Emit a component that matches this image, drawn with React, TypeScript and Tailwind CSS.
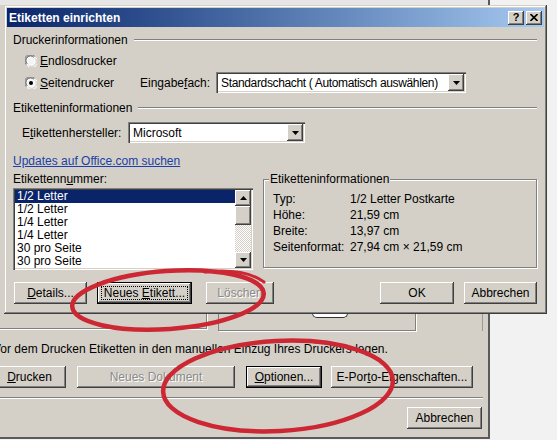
import type { ReactNode } from 'react'
import clsx from 'clsx'

const raised =
  'shadow-[inset_-1px_-1px_0_#404040,inset_1px_1px_0_#ffffff,inset_-2px_-2px_0_#808080,inset_2px_2px_0_#d4d0c8]'
const sunken =
  'shadow-[inset_1px_1px_0_#808080,inset_2px_2px_0_#404040,inset_-1px_-1px_0_#ffffff,inset_-2px_-2px_0_#d4d0c8]'

function Button({
  children,
  className,
  disabled,
  isDefault,
  focused,
}: {
  children: ReactNode
  className?: string
  disabled?: boolean
  isDefault?: boolean
  focused?: boolean
}) {
  return (
    <div
      className={clsx(
        'flex h-[22px] shrink-0 items-center justify-center bg-[#d4d0c8] leading-[14px] whitespace-nowrap',
        raised,
        isDefault && 'border border-black',
        disabled && 'text-[#8a8a8a] [text-shadow:1px_1px_0_#ffffff]',
        className,
      )}
    >
      {focused ? (
        <div className="m-[3px] flex flex-1 self-stretch items-center justify-center border border-dotted border-black">
          <span>{children}</span>
        </div>
      ) : (
        <span>{children}</span>
      )}
    </div>
  )
}

function Radio({ checked }: { checked?: boolean }) {
  return (
    <svg width="12" height="12" viewBox="0 0 12 12" className="shrink-0">
      <circle cx="6" cy="6" r="5.5" fill="#ffffff" />
      <path d="M1.2 9.6 A5.4 5.4 0 0 1 9.6 1.2" stroke="#808080" strokeWidth="1" fill="none" />
      <path d="M2.2 8.8 A4.3 4.3 0 0 1 8.8 2.2" stroke="#404040" strokeWidth="1" fill="none" />
      <path d="M10.8 2.4 A5.4 5.4 0 0 1 2.4 10.8" stroke="#ffffff" strokeWidth="1" fill="none" />
      <path d="M9.8 3.2 A4.3 4.3 0 0 1 3.2 9.8" stroke="#d4d0c8" strokeWidth="1" fill="none" />
      <circle cx="6" cy="6" r="3.6" fill="#f4f4f4" />
      {checked && <circle cx="6" cy="6" r="2" fill="#000000" />}
    </svg>
  )
}

function Arrow({ up }: { up?: boolean }) {
  return (
    <svg width="7" height="4" viewBox="0 0 7 4">
      <path d={up ? 'M3.5 0 L7 4 L0 4 Z' : 'M0 0 L7 0 L3.5 4 Z'} fill="#000000" />
    </svg>
  )
}

function Combo({ value, className, textClass }: { value: string; className: string; textClass?: string }) {
  return (
    <div className={clsx('flex h-[21px] items-stretch bg-white p-[2px]', sunken, className)}>
      <div className={clsx('flex flex-1 items-center overflow-hidden whitespace-nowrap pl-[3px]', textClass)}>
        {value}
      </div>
      <div className={clsx('flex w-[16px] items-center justify-center bg-[#d4d0c8]', raised)}>
        <Arrow />
      </div>
    </div>
  )
}

function GroupHeader({ label, className }: { label: string; className?: string }) {
  return (
    <div className={clsx('flex h-[14px] items-center gap-[6px]', className)}>
      <span className="leading-[14px]">{label}</span>
      <div className="flex-1 border-t border-b border-t-[#808080] border-b-white" />
    </div>
  )
}

const labels = ['1/2 Letter', '1/2 Letter', '1/4 Letter', '1/4 Letter', '30 pro Seite', '30 pro Seite']

const details = [
  ['Typ:', '1/2 Letter Postkarte'],
  ['Höhe:', '21,59 cm'],
  ['Breite:', '13,97 cm'],
  ['Seitenformat:', '27,94 cm × 21,59 cm'],
]

function BackWindow() {
  return (
    <div className="absolute left-[-20px] top-0 flex h-[439px] w-[510px] flex-col border-r-2 border-b-2 border-[#5a5a5a] bg-[#d4d0c8]">
      <div className="h-[5px] bg-[#e6e6e6] bg-[repeating-linear-gradient(90deg,#8890a4_0_1px,transparent_1px_4px)] bg-size-[4px_2px] bg-no-repeat" />
      <div className="flex h-[326px]">
        <div className="h-[324px] w-[227px] border-r border-b border-[#808080] shadow-[1px_1px_0_#ffffff]" />
        <div className="ml-[11px] flex w-[198px] items-end justify-center border border-[#808080] shadow-[1px_1px_0_#ffffff]">
          <div className="mb-[12px] ml-[26px] h-[14px] w-[36px] rounded-b-[5px] border-x border-b border-[#333333] bg-white" />
        </div>
        <div className="ml-auto mr-[5px] w-px bg-[#9a9a9a]" />
      </div>
      <div className="mt-[11px] h-[14px] pl-[13px] leading-[14px] whitespace-nowrap">
        Vor dem Drucken Etiketten in den manuellen Einzug Ihres Druckers legen.
      </div>
      <div className="mt-[10px] flex pl-[13px]">
        <Button className="w-[73px]">
          <span className="underline">D</span>rucken
        </Button>
        <Button className="ml-[11px] w-[158px]" disabled>
          Neues Dokument
        </Button>
        <Button className="ml-[11px] w-[76px]" isDefault>
          <span className="underline">O</span>ptionen...
        </Button>
        <Button className="ml-[9px] w-[142px]">
          E-Por<span className="underline">t</span>o-Eigenschaften...
        </Button>
      </div>
      <div className="mt-[9px] mr-[5px] border-t border-b border-t-[#808080] border-b-white" />
      <div className="mt-[8px] flex justify-end pr-[6px]">
        <Button className="w-[75px]">Abbrechen</Button>
      </div>
    </div>
  )
}

function LabelDialog() {
  return (
    <div className="absolute left-[4px] top-[5px] flex h-[309px] w-[543px] flex-col bg-[#d4d0c8] p-[3px] shadow-[inset_-1px_-1px_0_#404040,inset_1px_1px_0_#d4d0c8,inset_-2px_-2px_0_#808080,inset_2px_2px_0_#ffffff]">
      <div className="flex h-[19px] items-center bg-linear-to-r from-[#0a246a] to-[#a6caf0] pl-[2px] pr-[2px]">
        <span className="text-[12px] font-bold text-white">Etiketten einrichten</span>
        <div className="ml-auto flex gap-[2px]">
          <div className={clsx('flex h-[14px] w-[16px] items-center justify-center bg-[#d4d0c8] text-[11px] leading-none font-bold', raised)}>
            ?
          </div>
          <div className={clsx('flex h-[14px] w-[16px] items-center justify-center bg-[#d4d0c8]', raised)}>
            <svg width="8" height="7" viewBox="0 0 8 7">
              <path d="M0.5 0 L7.5 7 M7.5 0 L0.5 7" stroke="#000000" strokeWidth="1.6" />
            </svg>
          </div>
        </div>
      </div>

      <div className="flex flex-col pl-[6px] pr-[7px]">
        <GroupHeader label="Druckerinformationen" className="mt-[6px]" />

        <div className="mt-[7px] flex h-[14px] items-center gap-[3px] pl-[12px]">
          <Radio />
          <span>
            <span className="underline">E</span>ndlosdrucker
          </span>
        </div>

        <div className="mt-[4px] flex h-[21px] items-center">
          <div className="flex w-[127px] items-center gap-[3px] pl-[12px]">
            <Radio checked />
            <span>
              <span className="underline">S</span>eitendrucker
            </span>
          </div>
          <span className="w-[76px]">
            Eingabe<span className="underline">f</span>ach:
          </span>
          <Combo
            value="Standardschacht ( Automatisch auswählen)"
            className="w-[250px]"
            textClass="tracking-[-0.35px]"
          />
        </div>

        <GroupHeader label="Etiketteninformationen" className="mt-[8px]" />

        <div className="mt-[7px] flex h-[21px] items-center pl-[9px]">
          <span className="w-[106px]">
            E<span className="underline">t</span>ikettenhersteller:
          </span>
          <Combo value="Microsoft" className="w-[177px]" />
        </div>

        <div className="mt-[11px] h-[14px] leading-[14px]">
          <span className="text-[#203fa5] underline">Updates auf Office.com suchen</span>
        </div>

        <div className="mt-[4px] flex gap-[10px]">
          <div className="flex w-[240px] flex-col">
            <div className="h-[14px] leading-[14px]">
              Etikettenn<span className="underline">u</span>mmer:
            </div>
            <div className={clsx('mt-[2px] flex h-[82px] bg-white p-[2px]', sunken)}>
              <div className="flex flex-1 flex-col">
                {labels.map((l, i) => (
                  <div
                    key={i}
                    className={clsx(
                      'h-[13px] pl-[2px] leading-[13px]',
                      i === 0 && 'bg-[#0a246a] text-white',
                    )}
                  >
                    {l}
                  </div>
                ))}
              </div>
              <div className="flex w-[16px] flex-col">
                <div className={clsx('flex h-[16px] items-center justify-center bg-[#d4d0c8]', raised)}>
                  <Arrow up />
                </div>
                <div className={clsx('h-[19px] bg-[#d4d0c8]', raised)} />
                <div className="flex-1 bg-[repeating-conic-gradient(#ffffff_0_25%,#d4d0c8_0_50%)] bg-size-[2px_2px]" />
                <div className={clsx('flex h-[16px] items-center justify-center bg-[#d4d0c8]', raised)}>
                  <Arrow />
                </div>
              </div>
            </div>
          </div>

          <fieldset className="h-[96px] w-[274px] border border-[#808080] shadow-[inset_1px_1px_0_#ffffff,1px_1px_0_#ffffff]">
            <legend className="ml-[5px] bg-[#d4d0c8] px-[1px] leading-[14px]">Etiketteninformationen</legend>
            <div className="flex flex-col pt-[5px] pl-[9px]">
              {details.map(([k, v]) => (
                <div key={k} className="flex h-[16px] items-center">
                  <span className="w-[77px]">{k}</span>
                  <span>{v}</span>
                </div>
              ))}
            </div>
          </fieldset>
        </div>

        <div className="mt-[12px] flex">
          <Button className="ml-[1px] w-[73px]">
            <span className="underline">D</span>etails...
          </Button>
          <Button className="ml-[10px] w-[95px]" isDefault focused>
            Neues <span className="underline">E</span>tikett...
          </Button>
          <Button className="ml-[14px] w-[68px]" disabled>
            Löschen
          </Button>
          <Button className="ml-auto w-[74px]">OK</Button>
          <Button className="ml-[10px] w-[73px]">Abbrechen</Button>
        </div>
      </div>
    </div>
  )
}

function Marks() {
  return (
    <svg className="pointer-events-none absolute inset-0" width="557" height="440" viewBox="0 0 557 440">
      <g fill="none" stroke="#cc2733" strokeLinecap="round">
        <ellipse cx="168" cy="300" rx="96" ry="29" transform="rotate(-4 168 300)" strokeWidth="4.5" />
        <path d="M205 272 Q245 268 264 282" strokeWidth="3" />
        <ellipse cx="278" cy="386" rx="115" ry="45" transform="rotate(-3 278 386)" strokeWidth="4.5" />
        <path d="M300 341 Q350 342 380 360" strokeWidth="3" />
      </g>
    </svg>
  )
}

export default function App() {
  return (
    <div className="relative h-[440px] w-[557px] overflow-hidden bg-[#f2f2f2] font-['Liberation_Sans',Arial,sans-serif] text-[12px] text-black">
      <BackWindow />
      <LabelDialog />
      <Marks />
    </div>
  )
}
